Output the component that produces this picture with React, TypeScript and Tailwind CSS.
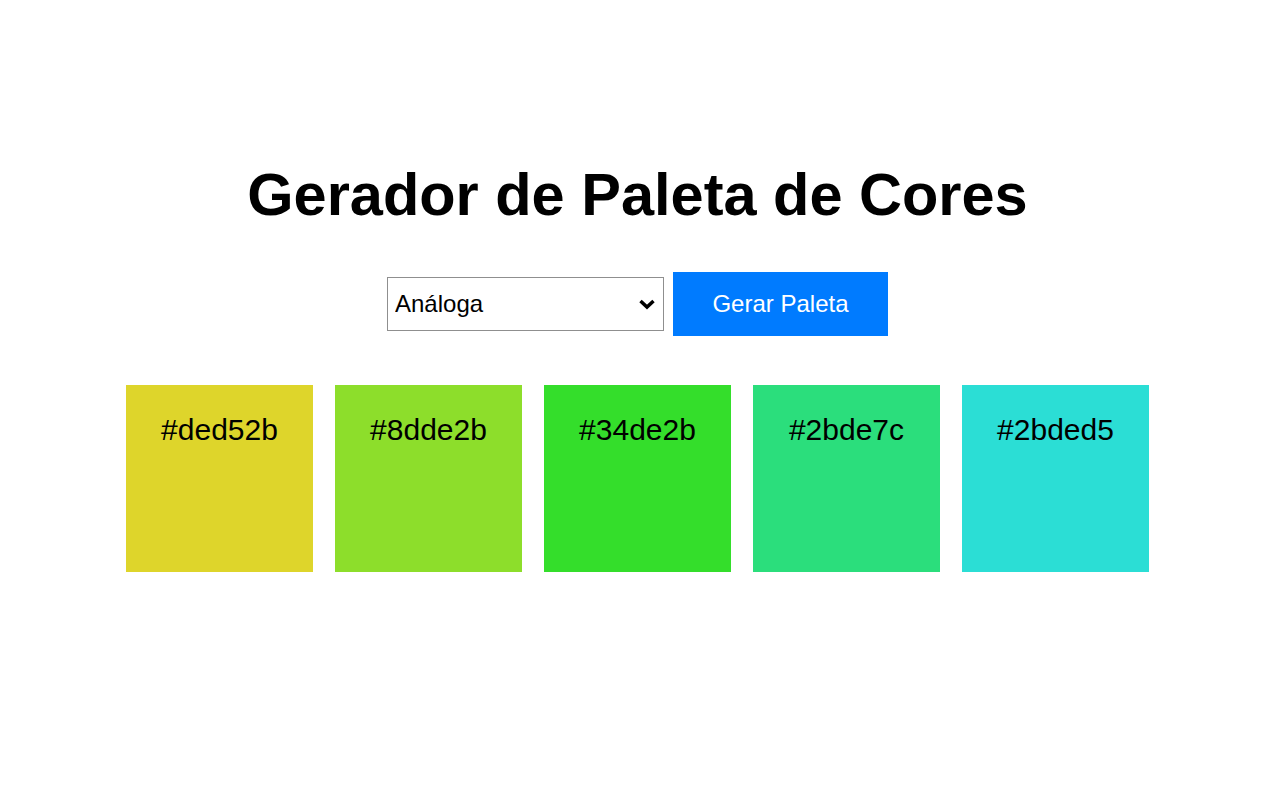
import { useState } from "react";

const COLORS = ["#ded52b", "#8dde2b", "#34de2b", "#2bde7c", "#2bded5"];

export default function App() {
  const [mode, setMode] = useState("analoga");

  return (
    <div className="min-h-screen bg-white pr-[5px] font-['Liberation_Sans',Arial,sans-serif] text-black">
      <div className="flex flex-col items-center pt-[161px]">
        <h1 className="text-[59.5px] font-bold leading-[68px]">Gerador de Paleta de Cores</h1>

        <div className="mt-[43px] flex items-center gap-[9px]">
          <div className="relative">
            <select
              value={mode}
              onChange={(e) => setMode(e.target.value)}
              className="h-[54px] w-[277px] appearance-none border border-[#8f8f8f] bg-white pl-[7px] text-[24px] outline-none"
            >
              <option value="analoga">Análoga</option>
              <option value="complementar">Complementar</option>
              <option value="triade">Tríade</option>
            </select>
            <svg
              className="pointer-events-none absolute right-[8px] top-[22px]"
              width="18"
              height="11"
              viewBox="0 0 18 11"
            >
              <path d="M2.5 2 L9 8 L15.5 2" fill="none" stroke="#000" strokeWidth="3.5" />
            </svg>
          </div>
          <button className="h-[64px] w-[215px] bg-[#007bff] text-[24px] text-white">Gerar Paleta</button>
        </div>

        <div className="mt-[49px] flex gap-[22px]">
          {COLORS.map((c) => (
            <div key={c} className="h-[187px] w-[187px] pt-[28px] text-center" style={{ background: c }}>
              <p className="text-[30px] leading-[34px]">{c}</p>
            </div>
          ))}
        </div>
      </div>
    </div>
  );
}
